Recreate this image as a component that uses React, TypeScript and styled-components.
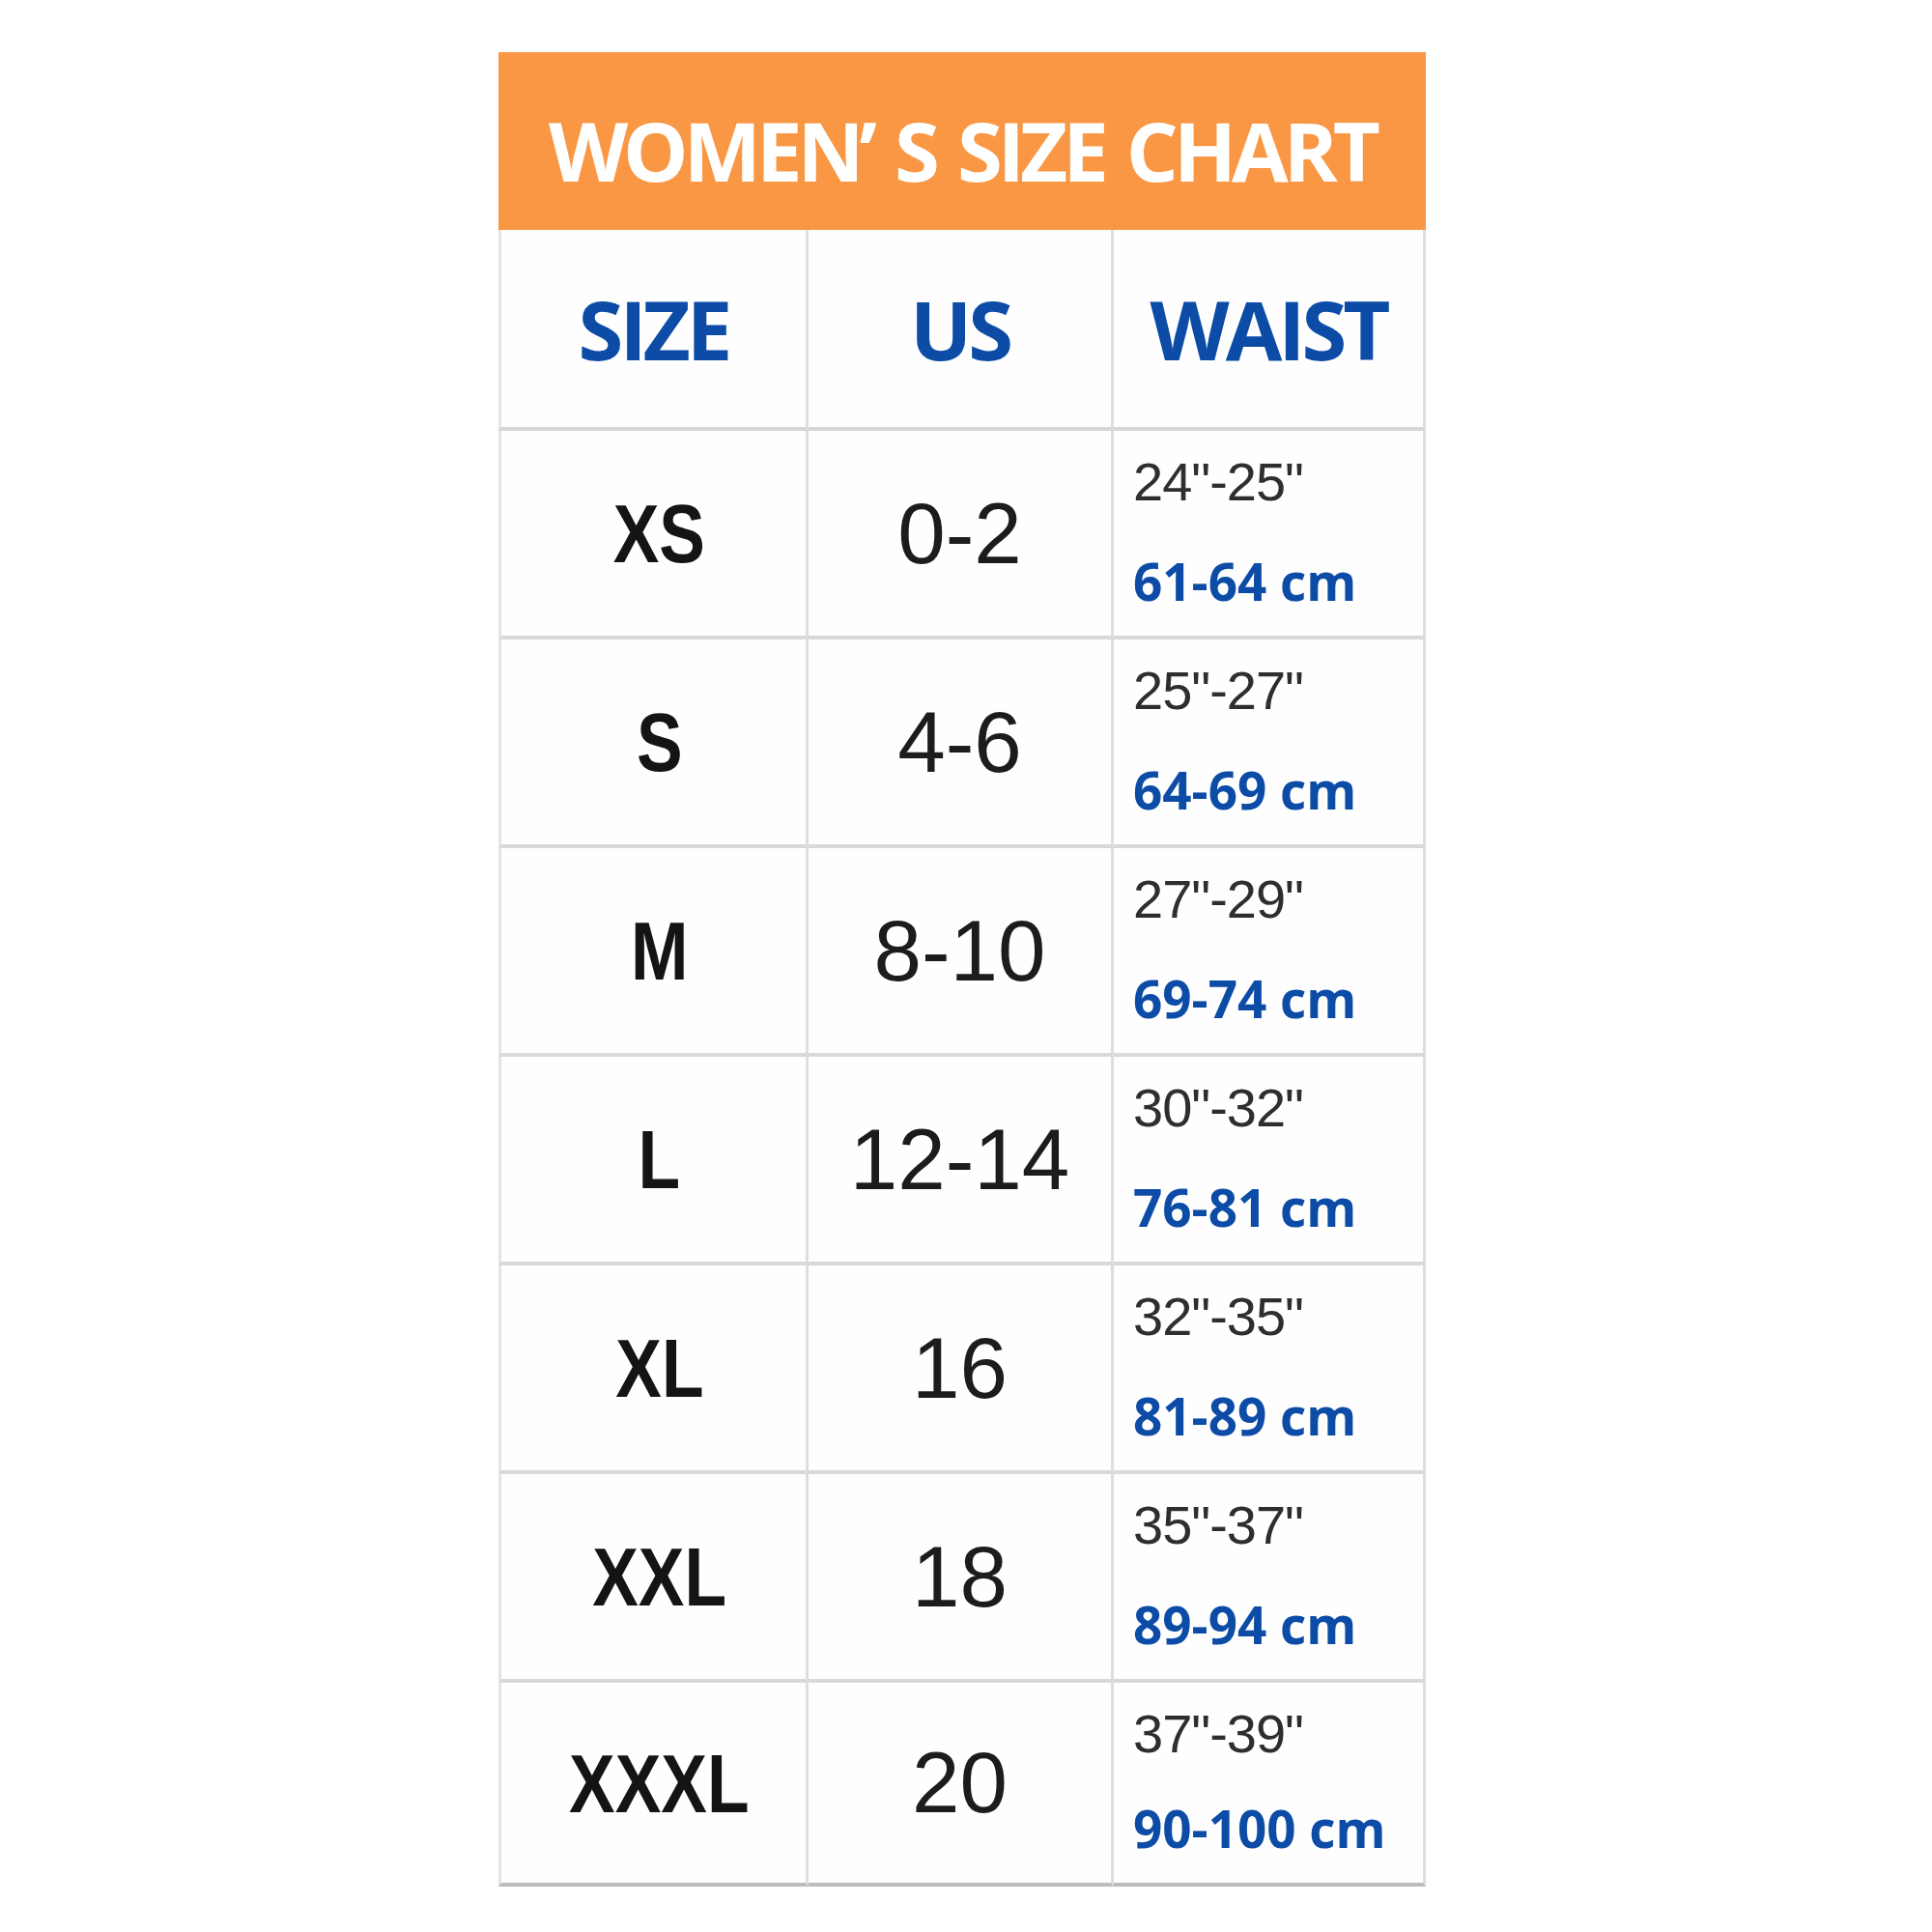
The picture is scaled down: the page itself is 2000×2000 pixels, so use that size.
import React from 'react';
import styled, { createGlobalStyle } from 'styled-components';

const GlobalStyle = createGlobalStyle`
  html, body {
    margin: 0;
    padding: 0;
    background: #ffffff;
  }
`;

interface SizeRow {
  size: string;
  us: string;
  inches: string;
  cm: string;
}

const ROWS: SizeRow[] = [
  { size: 'XS', us: '0-2', inches: '24"-25"', cm: '61-64 cm' },
  { size: 'S', us: '4-6', inches: '25"-27"', cm: '64-69 cm' },
  { size: 'M', us: '8-10', inches: '27"-29"', cm: '69-74 cm' },
  { size: 'L', us: '12-14', inches: '30"-32"', cm: '76-81 cm' },
  { size: 'XL', us: '16', inches: '32"-35"', cm: '81-89 cm' },
  { size: 'XXL', us: '18', inches: '35"-37"', cm: '89-94 cm' },
  { size: 'XXXL', us: '20', inches: '37"-39"', cm: '90-100 cm' },
];

function App() {
  return (
    <Page>
      <GlobalStyle />
      <Chart>
        <TitleBar>
          <Title>WOMEN’ S SIZE CHART</Title>
        </TitleBar>
        <Table>
          <HeadCell first>
            <HeadText>SIZE</HeadText>
          </HeadCell>
          <HeadCell>
            <HeadText>US</HeadText>
          </HeadCell>
          <HeadCell>
            <HeadText>WAIST</HeadText>
          </HeadCell>

          {ROWS.map((row, i) => {
            const last = i === ROWS.length - 1;
            return (
              <React.Fragment key={row.size}>
                <SizeCell first last={last}>
                  <SizeText>{row.size}</SizeText>
                </SizeCell>
                <Cell last={last}>
                  <UsText>{row.us}</UsText>
                </Cell>
                <WaistCell last={last}>
                  <Inches>{row.inches}</Inches>
                  <Centimeters>{row.cm}</Centimeters>
                </WaistCell>
              </React.Fragment>
            );
          })}
        </Table>
      </Chart>
    </Page>
  );
}

const Page = styled.div`
  width: 2000px;
  min-height: 2000px;
  padding: 54px 0 0 516px;
  box-sizing: border-box;
`;

const Chart = styled.div`
  width: 960px;
`;

const TitleBar = styled.div`
  height: 184px;
  background-color: #f99745;
  display: flex;
  align-items: center;
  justify-content: center;
  padding-top: 18px;
  box-sizing: border-box;
`;

const Title = styled.h1`
  margin: 0;
  font-family: 'Open Sans', 'Noto Sans', sans-serif;
  font-weight: 700;
  font-size: 85px;
  line-height: 1;
  letter-spacing: -5px;
  word-spacing: 6px;
  color: #ffffff;
  white-space: nowrap;
`;

const Table = styled.div`
  display: grid;
  grid-template-columns: 321px 316px 323px;
  grid-template-rows: 208px repeat(6, 216px) 211px;
`;

const Cell = styled.div<{ first?: boolean; last?: boolean }>`
  display: flex;
  align-items: center;
  justify-content: center;
  border-right: 3px solid #dedede;
  border-left: ${({ first }) => (first ? '3px solid #e4e4e4' : 'none')};
  border-bottom: ${({ last }) => (last ? '4px solid #bcbcbc' : '4px solid #d9d9d9')};
  box-sizing: border-box;
  background: #fefefe;
`;

const HeadCell = styled(Cell)`
  border-bottom: 4px solid #d6d6d6;
`;

const SizeCell = styled(Cell)`
  padding-left: 12px;
`;

const HeadText = styled.span`
  font-family: 'Open Sans', 'Noto Sans', sans-serif;
  font-weight: 700;
  font-size: 85px;
  line-height: 1;
  letter-spacing: -4px;
  color: #0c4ca6;
`;

const SizeText = styled.span`
  display: inline-block;
  font-family: 'Liberation Sans', Arial, sans-serif;
  font-weight: 700;
  font-size: 86px;
  line-height: 1;
  color: #141414;
  transform: scaleX(0.83);
`;

const UsText = styled.span`
  font-family: 'Liberation Sans', Arial, sans-serif;
  font-weight: 400;
  font-size: 89px;
  line-height: 1;
  color: #1c1c1c;
`;

const WaistCell = styled(Cell)`
  flex-direction: column;
  align-items: flex-start;
  justify-content: space-between;
  padding: 25px 0 30px 20px;
`;

const Inches = styled.span`
  font-family: 'Liberation Sans', Arial, sans-serif;
  font-size: 56px;
  line-height: 1;
  letter-spacing: -1px;
  color: #2e2e2e;
`;

const Centimeters = styled.span`
  font-family: 'Open Sans', 'Noto Sans', sans-serif;
  font-weight: 700;
  font-size: 53px;
  line-height: 1;
  color: #0c4ca6;
`;

export default App;
